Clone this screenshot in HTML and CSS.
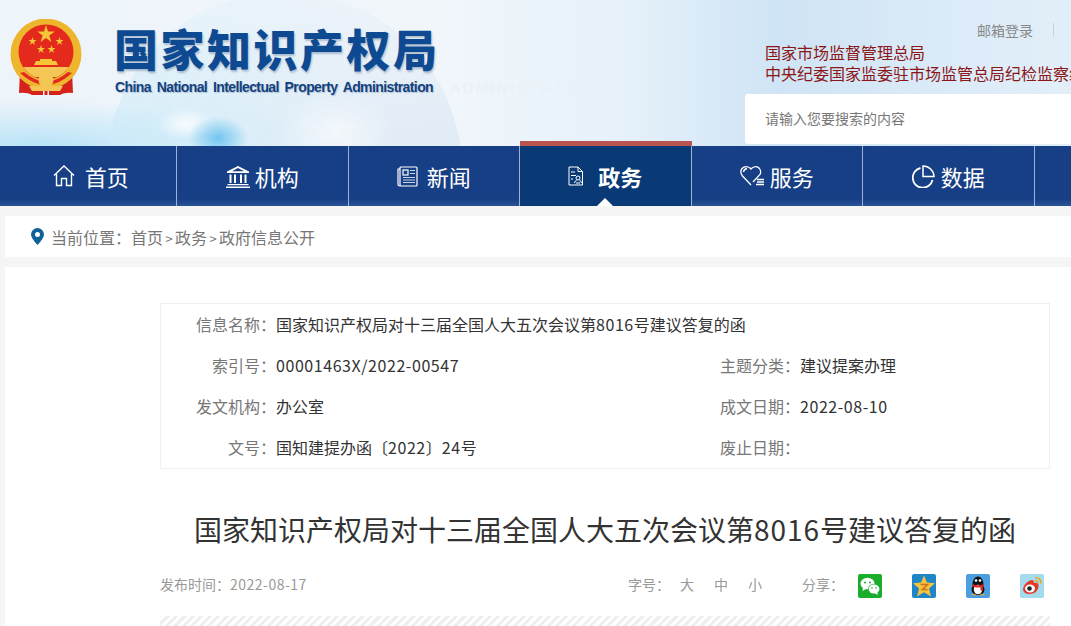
FILE: index.html
```html
<!DOCTYPE html>
<html lang="zh-CN">
<head>
  <meta charset="UTF-8" />
  <meta name="viewport" content="width=device-width, initial-scale=1" />
  <title>国家知识产权局对十三届全国人大五次会议第8016号建议答复的函</title>
  <link rel="stylesheet" href="styles.css">
</head>
<body>
<div class="page">

  <!-- 顶部 -->
  <header class="top">
    <div class="globe"></div>
    <span class="ghost">ADMINISTRATION</span>
    <svg class="emblem" viewBox="0 0 72 78" width="72" height="78">
      <path d="M10 52 L9 74 Q16 73 23 76 L30 66 Z" fill="#d5231c"/>
      <path d="M62 52 L63 74 Q56 73 49 76 L42 66 Z" fill="#d5231c"/>
      <circle cx="36" cy="35" r="35.500" fill="#eeb62c"/>
      <circle cx="36" cy="33" r="27.500" fill="#e42a1d"/>
      <path d="M36 6 L38 12.500 L44.800 12.500 L39.300 16.500 L41.400 23 L36 19 L30.600 23 L32.700 16.500 L27.200 12.500 L34 12.500 Z" fill="#f6c437"/>
      <g fill="#f6c437">
        <path d="M22.500 18 L23.500 21 L26.500 21 L24 22.900 L25 26 L22.500 24.100 L20 26 L21 22.900 L18.500 21 L21.500 21 Z"/>
        <path d="M49.500 18 L50.500 21 L53.500 21 L51 22.900 L52 26 L49.500 24.100 L47 26 L48 22.900 L45.500 21 L48.500 21 Z"/>
        <path d="M31 26 L32 29 L35 29 L32.500 30.900 L33.500 34 L31 32.100 L28.500 34 L29.500 30.900 L27 29 L30 29 Z"/>
        <path d="M41.500 26 L42.500 29 L45.500 29 L43 30.900 L44 34 L41.500 32.100 L39 34 L40 30.900 L37.500 29 L40.500 29 Z"/>
        <path d="M24 46 H48 L46 42 H42 V40 H30 V42 H26 Z"/>
        <path d="M13 48 H59 Q54 55 47 58 H25 Q18 55 13 48 Z" fill="#f4c655"/>
      </g>
      <path d="M14 53 Q36 72 58 53 L62 54 Q36 78 10 54 Z" fill="#e42a1d"/>
      <circle cx="36" cy="61" r="7.500" fill="#f4c655"/>
      <path d="M19 67 L53 67 L50 72 H22 Z" fill="#f4c655"/>
      <path d="M24 72 H33 V76 H21 Z M48 72 H39 V76 H51 Z M34.500 72 H37.500 V76 H34.500 Z" fill="#d5231c"/>
    </svg>
    <div class="logo">
      <div class="logo-cn">国家知识产权局</div>
      <div class="logo-en">China National Intellectual Property Administration</div>
    </div>
    <div class="top-right">
      <div class="mail"><a>邮箱登录</a></div>
      <div class="org">国家市场监督管理总局</div>
      <div class="org">中央纪委国家监委驻市场监管总局纪检监察组</div>
      <div class="search">请输入您要搜索的内容</div>
    </div>
  </header>

  <!-- 导航 -->
  <nav class="nav">
    <a class="nav-item">
      <svg width="22" height="24" viewBox="0 0 22 24" fill="none" stroke="#fff" stroke-width="1.400"><path d="M1 11.500 L11 2 L21 11.500 M3.500 10 V21.500 H8.500 V14.500 H13.500 V21.500 H18.500 V10"/></svg>
      <span class="gap10">首页</span>
    </a>
    <a class="nav-item">
      <svg width="24" height="23" viewBox="0 0 24 23" fill="#fff"><path d="M12 1 L23 6.500 V8 H1 V6.500 Z M12 3 L6 6.300 H18 Z" fill-rule="evenodd"/><rect x="3.500" y="9.500" width="2" height="8.500"/><rect x="8" y="9.500" width="2" height="8.500"/><rect x="14" y="9.500" width="2" height="8.500"/><rect x="18.500" y="9.500" width="2" height="8.500"/><rect x="1.500" y="19" width="21" height="1.200"/><rect x="0" y="21.500" width="24" height="1.500"/></svg>
      <span class="gap5">机构</span>
    </a>
    <a class="nav-item">
      <svg width="21" height="21" viewBox="0 0 21 21" fill="none" stroke="#fff" stroke-width="1.200"><rect x="3" y="1" width="17" height="19" rx="1"/><path d="M3 3 H1 V18.500 Q1 20 3 20"/><rect x="6" y="4" width="5" height="5"/><path d="M13 4.500 H18 M13 7.500 H18 M6 11.500 H18 M6 14 H18 M6 16.500 H18" stroke="#c6d2e6"/></svg>
      <span class="gap9">新闻</span>
    </a>
    <a class="nav-item active">
      <svg width="15" height="20" viewBox="0 0 15 20" fill="none" stroke="#fff" stroke-width="1"><path d="M1 1 H10 L14.500 5.500 V19 H1 Z M10 1 V5.500 H14.500"/><path d="M3 6 H7 M3 9.500 H8 M3 13 H5"/><circle cx="10" cy="12" r="2"/><path d="M6.500 17 Q7 14.500 8.500 14.500 M13.500 17 Q13 14.500 11.500 14.500 M8 17 H12"/></svg>
      <span class="gap15">政务</span>
    </a>
    <a class="nav-item">
      <svg width="25" height="22" viewBox="0 0 25 22" fill="none" stroke="#fff" stroke-width="1.300"><path d="M11 20 L2.500 11 Q-0.500 7 2 3.500 Q5.500 0 10 3 L11 4 L12 3 Q16.500 0 19.500 3.500 Q21.500 6.500 20 9.500 L13 17"/><path d="M3.500 7 Q4 4 7 3.500"/><path d="M17 14.500 H24 M17 17 H24 M16 19.500 H24"/></svg>
      <span class="gap5">服务</span>
    </a>
    <a class="nav-item">
      <svg width="23" height="23" viewBox="0 0 23 23" fill="none" stroke="#fff" stroke-width="1.800"><path d="M8.500 3 A10 10 0 1 0 20.500 15"/><path d="M11 1 A11 11 0 0 1 22 11.500 H11 Z" stroke-width="1.500"/></svg>
      <span class="gap6">数据</span>
    </a>
  </nav>

  <div class="crumb">
    <svg width="13" height="17" viewBox="0 0 13 17"><path d="M6.500 0 A6.500 6.500 0 0 1 13 6.500 Q13 10 6.500 17 Q0 10 0 6.500 A6.500 6.500 0 0 1 6.500 0 Z M6.500 4 A2.500 2.500 0 1 0 6.500 9 A2.500 2.500 0 1 0 6.500 4 Z" fill="#0f6199" fill-rule="evenodd"/></svg>
    <span class="crumb-text">当前位置：<a>首页</a><i>&gt;</i><a>政务</a><i>&gt;</i><a>政府信息公开</a></span>
  </div>

  <main class="card">
    <div class="info">
      <div class="info-row">
        <span class="info-label">信息名称：</span>
        <span class="info-wide">国家知识产权局对十三届全国人大五次会议第<span class="num">8016</span>号建议答复的函</span>
      </div>
      <div class="info-row">
        <span class="info-label">索引号：</span>
        <span class="info-value num">00001463X/2022-00547</span>
        <span class="info-label">主题分类：</span>
        <span class="info-value">建议提案办理</span>
      </div>
      <div class="info-row">
        <span class="info-label">发文机构：</span>
        <span class="info-value">办公室</span>
        <span class="info-label">成文日期：</span>
        <span class="info-value num">2022-08-10</span>
      </div>
      <div class="info-row">
        <span class="info-label">文号：</span>
        <span class="info-value">国知建提办函〔<span class="num">2022</span>〕<span class="num">24</span>号</span>
        <span class="info-label">废止日期：</span>
        <span class="info-value"></span>
      </div>
    </div>

    <h1 class="title">国家知识产权局对十三届全国人大五次会议第<span class="num">8016</span>号建议答复的函</h1>

    <div class="meta">
      <span class="meta-text">发布时间：<span class="num">2022-08-17</span></span>
      <div class="size meta-text">
        <span class="size-label">字号：</span>
        <a>大</a><a>中</a><a>小</a>
      </div>
      <div class="share">
        <span class="share-label meta-text">分享：</span>
        <svg class="share-icon" viewBox="0 0 24 24"><rect width="24" height="24" rx="2" fill="#1aad2b"/><ellipse cx="9.500" cy="9.500" rx="7" ry="5.800" fill="#fff"/><path d="M5 13 L4.500 17 L9 14.500 Z" fill="#fff"/><circle cx="7" cy="8.500" r="1" fill="#1aad2b"/><circle cx="12" cy="8.500" r="1" fill="#1aad2b"/><ellipse cx="16" cy="15" rx="6" ry="5" fill="#1aad2b"/><ellipse cx="16" cy="15" rx="5.400" ry="4.500" fill="#fff"/><path d="M19 18 L20 21 L16.500 19 Z" fill="#fff"/><circle cx="14" cy="14" r="0.800" fill="#1aad2b"/><circle cx="18" cy="14" r="0.800" fill="#1aad2b"/></svg>
        <svg class="share-icon" viewBox="0 0 24 24"><rect width="24" height="24" rx="2" fill="#1e86c8"/><path d="M12 1.500 L15 8.500 L23 9.300 L17 14.500 L19 22.500 L12 18.300 L5 22.500 L7 14.500 L1 9.300 L9 8.500 Z" fill="#f7c23c"/><path d="M8.500 10.500 H15.500 L10.500 15.500 H15.500" fill="none" stroke="#c9741c" stroke-width="1.600"/></svg>
        <svg class="share-icon" viewBox="0 0 24 24"><rect width="24" height="24" rx="2" fill="#4b9fe0"/><ellipse cx="12" cy="10" rx="5.500" ry="7.500" fill="#111"/><ellipse cx="12" cy="15.500" rx="6.500" ry="5.500" fill="#111"/><ellipse cx="12" cy="15.500" rx="4.200" ry="4.800" fill="#fff"/><circle cx="10" cy="6.500" r="1.300" fill="#fff"/><circle cx="14" cy="6.500" r="1.300" fill="#fff"/><path d="M6.500 10 Q12 12.500 17.500 10 L17.500 12.500 Q12 14.500 6.500 12.500 Z" fill="#d8221c"/><path d="M14.500 12 H17 V16.500 H14.500 Z" fill="#d8221c"/><path d="M5 21 Q8 18.500 11 21.500 Z M19 21 Q16 18.500 13 21.500 Z" fill="#f3a91f"/></svg>
        <svg class="share-icon" viewBox="0 0 24 24"><rect width="24" height="24" rx="2" fill="#a3dcec"/><path d="M3 15 Q4 9 10 6.500 Q14 5 14 9 Q19 8 18.500 12.500 Q18 19 10 20 Q3 20 3 15 Z" fill="#e6372c"/><ellipse cx="10" cy="14.500" rx="5" ry="4" fill="#fff"/><circle cx="9.500" cy="14.500" r="2.300" fill="#222"/><path d="M15 3.500 Q21 3.500 21 9.500 M15 6.500 Q18 6.500 18 9.500" fill="none" stroke="#f2a51f" stroke-width="1.500"/></svg>
      </div>
    </div>

    <div class="hatch"></div>
  </main>

</div>
</body>
</html>
```

FILE: styles.css
```css
html, body {
  margin: 0;
  height: 100%;
  overflow: hidden;
}

body {
  background: #f5f5f5;
  color: #333;
  font-family: "Noto Sans CJK SC", "Liberation Sans", sans-serif;
}

a {
  color: inherit;
  text-decoration: none;
}

.page {
  width: 1200px;
}

.num {
  letter-spacing: 0.035em;
}

/* 顶部 */
.top {
  position: relative;
  display: flex;
  height: 146px;
  box-sizing: border-box;
  padding: 19px 0 0 10px;
  overflow: hidden;
  background:
    radial-gradient(ellipse 220px 50px at 40px 150px, rgba(178, 225, 248, 0.95), rgba(178, 225, 248, 0)),
    linear-gradient(90deg, #edf4fa 0, #f1f6fb 440px, #e6f1fa 620px, #cfe4f5 780px, #d8e9f7 900px, #e2eff9 1071px);
}

/* 地球底图 */
.globe {
  position: absolute;
  top: -8px;
  left: 106px;
  width: 356px;
  height: 356px;
  border-radius: 50%;
  background:
    radial-gradient(ellipse 30px 22px at 112px 146px, rgba(110, 195, 240, 0.95), rgba(110, 195, 240, 0)),
    radial-gradient(ellipse 30px 16px at 80px 132px, rgba(255, 255, 255, 0.85), rgba(255, 255, 255, 0)),
    radial-gradient(ellipse 60px 40px at 230px 140px, rgba(255, 255, 255, 0.6), rgba(255, 255, 255, 0)),
    linear-gradient(100deg, rgba(205, 235, 249, 0.7) 0, rgba(205, 234, 248, 0.65) 32%, rgba(222, 234, 245, 0.8) 62%, rgba(218, 231, 243, 0.7) 100%);
  mask-image: linear-gradient(rgba(0, 0, 0, 0.25) 4%, #000 40%);
}

.ghost {
  position: absolute;
  top: 79px;
  left: 450px;
  font-family: "Liberation Sans", sans-serif;
  font-size: 15px;
  letter-spacing: 2.400px;
  color: #e9f0f6;
}

.emblem {
  position: relative;
  flex: none;
}

.logo {
  position: relative;
  margin: 4px 0 0 32px;
  width: 331px;
}

.logo-cn {
  font-size: 44px;
  font-weight: 900;
  line-height: 50px;
  letter-spacing: 2.500px;
  color: #0d4a92;
  white-space: nowrap;
  text-shadow: 1px 2px 2px rgba(60, 90, 130, 0.35);
}

.logo-en {
  margin: 5px 0 0 1px;
  font-family: "Liberation Sans", sans-serif;
  font-size: 14px;
  font-weight: 700;
  line-height: 18px;
  letter-spacing: -0.600px;
  word-spacing: 2.500px;
  color: #13427f;
  white-space: nowrap;
  text-shadow: 1px 1px 1px rgba(60, 90, 130, 0.3);
}

.top-right {
  position: relative;
  margin-left: 300px;
  width: 455px;
}

.mail {
  height: 24px;
  margin-top: -1px;
  padding-left: 232px;
  font-size: 14px;
  line-height: 24px;
  color: #888;
}

.mail a {
  display: inline-block;
  padding-right: 20px;
  border-right: 1px solid #c8d2da;
  line-height: 14px;
}

.org {
  padding-left: 20px;
  font-size: 16px;
  line-height: 21px;
  color: #8a1616;
  white-space: nowrap;
}

.search {
  margin-top: 10px;
  height: 50px;
  box-sizing: border-box;
  padding-left: 20px;
  background: #fff;
  border-radius: 3px;
  font-size: 14px;
  line-height: 49px;
  color: #777;
}

/* 导航 */
.nav {
  display: flex;
  height: 60px;
  padding-left: 5.500px;
  background: linear-gradient(#173f85 0, #173f85 88%, #2a5295 100%);
}

.nav-item {
  position: relative;
  display: flex;
  align-items: center;
  justify-content: center;
  flex: none;
  width: 171.500px;
  box-sizing: border-box;
  border-right: 1px solid #9db2d6;
  font-size: 22px;
  color: #fff;
}

.nav-item.active {
  background: #0a3a75;
  font-weight: 700;
}

.nav-item.active::before {
  content: "";
  position: absolute;
  top: -5px;
  left: 0;
  right: -1px;
  height: 5px;
  background: #b95450;
}

.nav-item.active::after {
  content: "";
  position: absolute;
  bottom: 0;
  left: 50%;
  margin-left: -8px;
  border: 8px solid transparent;
  border-top: 0;
  border-bottom-color: #fff;
}

.gap5 { margin-left: 5px; }
.gap6 { margin-left: 6px; }
.gap9 { margin-left: 9px; }
.gap10 { margin-left: 10px; }
.gap15 { margin-left: 15px; }

/* 当前位置 */
.crumb {
  display: flex;
  align-items: center;
  height: 41px;
  margin: 10px 0 0 5px;
  padding-left: 26px;
  background: #fff;
  font-size: 16px;
  color: #777;
}

.crumb-text {
  margin-left: 7px;
}

.crumb-text i {
  display: inline-block;
  width: 12px;
  text-align: center;
  font-style: normal;
  font-size: 13px;
}

/* 内容 */
.card {
  margin: 10px 0 0 5px;
  padding: 36px 0 0 155px;
  height: 323px;
  background: #fff;
}

.info {
  width: 890px;
  box-sizing: border-box;
  border: 1px solid #f0f0f0;
}

.info-row {
  display: grid;
  grid-template-columns: 115px 408px 116px 1fr;
  height: 41px;
  font-size: 16px;
  line-height: 41px;
}

.info-label {
  text-align: right;
  color: #777;
}

.info-wide {
  grid-column: 2 / 5;
}

.title {
  margin: 40px 0 0;
  width: 890px;
  font-size: 28px;
  font-weight: 400;
  line-height: 40px;
  text-align: center;
  color: #333;
}

.meta {
  display: flex;
  align-items: center;
  width: 890px;
  height: 24px;
  margin-top: 25px;
  font-size: 14px;
  color: #999;
}

.meta-text {
  margin-bottom: 4px;
}

.size {
  display: flex;
  margin-left: auto;
}

.size-label {
  margin-right: 10px;
}

.size a {
  margin-right: 20px;
}

.share {
  display: flex;
  align-items: center;
  margin-left: 20px;
  padding-right: 6px;
}

.share-label {
  margin-right: 14px;
}

.share-icon {
  display: block;
  width: 24px;
  height: 24px;
  margin-right: 30px;
}

.share-icon:last-child {
  margin-right: 0;
}

.hatch {
  width: 890px;
  height: 11px;
  margin-top: 18px;
  background: repeating-linear-gradient(-45deg, #efefef 0 3px, #fff 3px 6px);
}
```
